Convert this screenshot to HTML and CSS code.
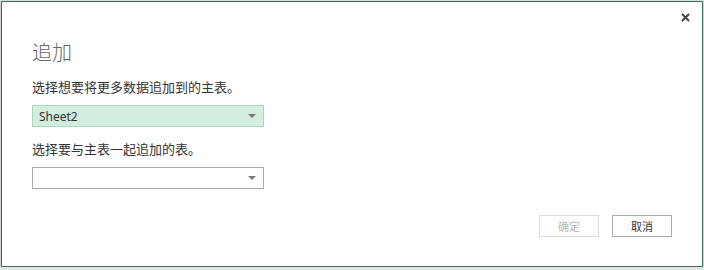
FILE: index.html
```html
<!DOCTYPE html>
<html lang="zh-CN">
<head>
    <meta charset="UTF-8">
    <title>追加</title>
    <link rel="stylesheet" href="styles.css">
</head>
<body>

    <div class="dialog">
        <div class="topbar">
            <button class="close-btn" title="关闭">
                <svg width="9" height="9" viewBox="0 0 9 9">
                    <path d="M1 1 L8 8 M8 1 L1 8" stroke="#444" stroke-width="2"/>
                </svg>
            </button>
        </div>
        <div class="content">
            <h1 class="title">追加</h1>
            <p class="label">选择想要将更多数据追加到的主表。</p>
            <div class="select selected">
                <span class="select-text">Sheet2</span>
                <span class="arrow"></span>
            </div>
            <p class="label second">选择要与主表一起追加的表。</p>
            <div class="select">
                <span class="select-text"></span>
                <span class="arrow"></span>
            </div>
        </div>
        <div class="actions">
            <button class="btn" disabled>确定</button>
            <button class="btn">取消</button>
        </div>
    </div>

</body>
</html>
```

FILE: styles.css
```css
body {
    margin: 0;
    background-color: #e4e6e5;
    font-family: "Noto Sans CJK SC", "Noto Sans", sans-serif;
    color: #444;
}
.dialog {
    box-sizing: border-box;
    width: 702px;
    height: 266px;
    margin: 1px 0 0 1px;
    background: #fff;
    border: 1px solid #3d6e58;
    display: flex;
    flex-direction: column;
    box-shadow: 0 1px 3px rgba(0, 0, 0, 0.25);
}
.topbar {
    display: flex;
    justify-content: flex-end;
    height: 30px;
    padding-right: 9px;
}
.close-btn {
    border: none;
    background: none;
    padding: 0;
    width: 16px;
    height: 16px;
    margin-top: 7px;
    display: flex;
    align-items: center;
    justify-content: center;
    cursor: pointer;
}
.content {
    padding-left: 30px;
    flex: 1;
}
.title {
    margin: 7px 0 0 0;
    font-size: 20px;
    font-weight: 300;
    line-height: 26px;
    color: #666;
}
.label {
    margin: 13px 0 0 0;
    font-size: 13px;
    line-height: 18px;
    color: #333;
}
.label.second {
    margin-top: 13px;
}
.select {
    box-sizing: border-box;
    width: 232px;
    height: 22px;
    margin-top: 9px;
    border: 1px solid #ababab;
    background: #fff;
    display: flex;
    align-items: center;
    justify-content: space-between;
    padding: 0 7px 0 6px;
}
.select.selected {
    background: #d3eddf;
    border-color: #a9d6bd;
}
.select-text {
    font-family: "Noto Sans", "Noto Sans CJK SC", sans-serif;
    font-size: 12px;
    color: #333;
}
.arrow {
    width: 0;
    height: 0;
    border-left: 4px solid transparent;
    border-right: 4px solid transparent;
    border-top: 4px solid #777;
}
.actions {
    display: flex;
    justify-content: flex-end;
    gap: 13px;
    padding: 0 30px 29px 0;
}
.btn {
    box-sizing: border-box;
    width: 60px;
    height: 22px;
    background: #fff;
    border: 1px solid #ababab;
    font-family: "Noto Sans CJK SC", sans-serif;
    font-size: 11px;
    color: #333;
    padding: 0;
    cursor: pointer;
}
.btn:disabled {
    border-color: #dcdcdc;
    color: #b8b8b8;
    cursor: default;
}
```
